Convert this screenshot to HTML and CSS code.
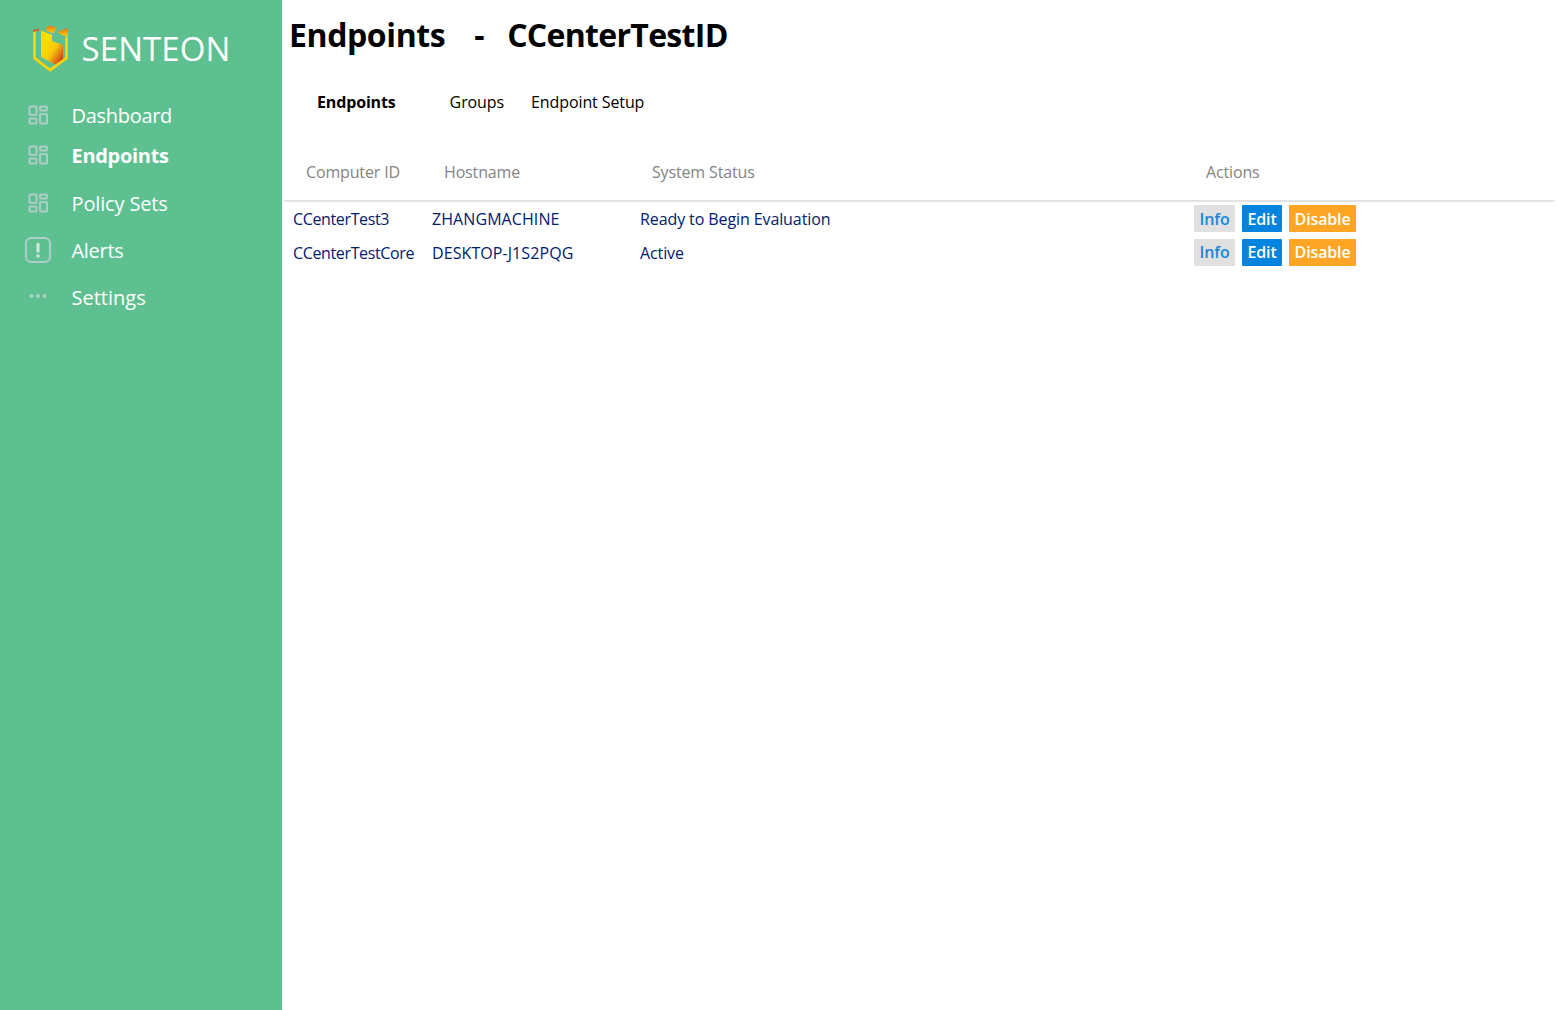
FILE: index.html
```html
<!DOCTYPE html>
<html lang="en">
<head>
    <meta charset="UTF-8">
    <meta name="viewport" content="width=device-width, initial-scale=1.0">
    <title>Endpoints - Senteon</title>
    <link rel="stylesheet" href="styles.css">
</head>
<body>
    <div class="layout">
        <aside class="sidebar">
            <div class="brand">
                <svg class="brand-logo" width="40" height="48" viewBox="30 25 40 48">
                    <defs>
                        <linearGradient id="logoFill" x1="0.2" y1="0.3" x2="0.85" y2="0.95">
                            <stop offset="0" stop-color="#ffdc00"/>
                            <stop offset="0.5" stop-color="#f8c90c"/>
                            <stop offset="1" stop-color="#d8400f"/>
                        </linearGradient>
                        <linearGradient id="logoTop" x1="0" y1="0" x2="0" y2="1">
                            <stop offset="0" stop-color="#e8701a"/>
                            <stop offset="1" stop-color="#ffd400"/>
                        </linearGradient>
                    </defs>
                    <path d="M34.500 30V58L50 70L66.500 58V37" fill="none" stroke="#ffd400" stroke-width="2.600"/>
                    <path d="M33 30L39 28.500L39 30.500L33 32Z" fill="#dc5a1a"/>
                    <path d="M41 30.500L52 35V41L63 45V59L55 64.500L41 57Z" fill="url(#logoFill)"/>
                    <path d="M46 27.500L50 25.500L57 28L53 33.500L46 30.500Z" fill="url(#logoTop)"/>
                    <path d="M57 32L68 28V37L62 35Z" fill="url(#logoTop)"/>
                </svg>
                <span class="brand-name">SENTEON</span>
            </div>
            <nav class="nav">
                <a class="nav-item nav-dashboard" href="#">
                    <svg class="nav-icon" width="24" height="24" viewBox="0 0 24 24"><rect x="3.500" y="3.500" width="7" height="8.500" rx="1"/><rect x="14" y="3.500" width="7" height="4" rx="1"/><rect x="14" y="11" width="7" height="9.500" rx="1"/><rect x="3.500" y="15.500" width="7" height="5" rx="1"/></svg>
                    <span>Dashboard</span>
                </a>
                <a class="nav-item nav-endpoints active" href="#">
                    <svg class="nav-icon" width="24" height="24" viewBox="0 0 24 24"><rect x="3.500" y="3.500" width="7" height="8.500" rx="1"/><rect x="14" y="3.500" width="7" height="4" rx="1"/><rect x="14" y="11" width="7" height="9.500" rx="1"/><rect x="3.500" y="15.500" width="7" height="5" rx="1"/></svg>
                    <span>Endpoints</span>
                </a>
                <a class="nav-item nav-policy" href="#">
                    <svg class="nav-icon" width="24" height="24" viewBox="0 0 24 24"><rect x="3.500" y="3.500" width="7" height="8.500" rx="1"/><rect x="14" y="3.500" width="7" height="4" rx="1"/><rect x="14" y="11" width="7" height="9.500" rx="1"/><rect x="3.500" y="15.500" width="7" height="5" rx="1"/></svg>
                    <span>Policy Sets</span>
                </a>
                <a class="nav-item nav-alerts" href="#">
                    <svg class="nav-icon" width="26" height="26" viewBox="0 0 26 26"><rect x="1" y="1" width="24" height="24" rx="5"/><path class="mark" d="M13 6v9.500M13 17.500v3"/></svg>
                    <span>Alerts</span>
                </a>
                <a class="nav-item nav-settings" href="#">
                    <svg class="nav-icon dots" width="24" height="24" viewBox="0 0 24 24"><circle cx="5.500" cy="11" r="2"/><circle cx="12" cy="11" r="2"/><circle cx="18.500" cy="11" r="2"/></svg>
                    <span>Settings</span>
                </a>
            </nav>
        </aside>
        <main class="content">
            <h1 class="page-title"><span>Endpoints</span><span class="dash">-</span><span class="title-id">CCenterTestID</span></h1>
            <div class="tabs">
                <a class="tab active" href="#">Endpoints</a>
                <a class="tab tab-groups" href="#">Groups</a>
                <a class="tab tab-setup" href="#">Endpoint Setup</a>
            </div>
            <table class="endpoints">
                <thead>
                    <tr>
                        <th class="col-id">Computer ID</th>
                        <th class="col-host">Hostname</th>
                        <th class="col-status">System Status</th>
                        <th>Actions</th>
                    </tr>
                </thead>
                <tbody>
                    <tr>
                        <td>CCenterTest3</td>
                        <td>ZHANGMACHINE</td>
                        <td>Ready to Begin Evaluation</td>
                        <td class="actions">
                            <button class="btn btn-info">Info</button>
                            <button class="btn btn-edit">Edit</button>
                            <button class="btn btn-disable">Disable</button>
                        </td>
                    </tr>
                    <tr>
                        <td>CCenterTestCore</td>
                        <td>DESKTOP-J1S2PQG</td>
                        <td>Active</td>
                        <td class="actions">
                            <button class="btn btn-info">Info</button>
                            <button class="btn btn-edit">Edit</button>
                            <button class="btn btn-disable">Disable</button>
                        </td>
                    </tr>
                </tbody>
            </table>
        </main>
    </div>
</body>
</html>
```

FILE: styles.css
```css
* {
    box-sizing: border-box;
}

html,
body {
    height: 100%;
}

body {
    margin: 0;
    font-family: "Open Sans", "Noto Sans", Arial, sans-serif;
    background-color: #fff;
    overflow: hidden;
}

.layout {
    display: flex;
    height: 100%;
}

.sidebar {
    width: 282px;
    flex-shrink: 0;
    background-color: #5ec090;
    color: #fff;
}

.brand {
    display: flex;
    align-items: center;
    height: 48px;
    margin-top: 25px;
    padding-left: 30px;
}

.brand-logo {
    flex-shrink: 0;
}

.brand-name {
    margin-left: 11.500px;
    font-size: 33px;
    line-height: 48px;
    letter-spacing: 0.1px;
}

.nav {
    display: flex;
    flex-direction: column;
    margin-top: 22px;
}

.nav-item {
    display: flex;
    align-items: center;
    height: 40px;
    padding-left: 26px;
    color: #fff;
    text-decoration: none;
    font-size: 20px;
    letter-spacing: -0.3px;
}

.nav-item span {
    margin-left: 21.500px;
}

.nav-endpoints {
    margin-bottom: 8px;
}

.nav-policy,
.nav-alerts {
    margin-bottom: 7px;
}

.nav-policy {
    letter-spacing: -0.15px;
}

.nav-settings {
    letter-spacing: 0;
}

.nav-item.active {
    font-weight: 700;
}

.nav-icon {
    flex-shrink: 0;
    fill: none;
    stroke: #aecdc6;
    stroke-width: 2;
}

.nav-alerts .nav-icon {
    margin-left: -1px;
}

.nav-alerts span {
    margin-left: 20.500px;
}

.nav-icon .mark {
    stroke: #d4e4e0;
    stroke-width: 3;
}

.nav-icon.dots {
    fill: #aecdc6;
    stroke: none;
}

.content {
    flex: 1;
    min-width: 0;
    padding: 0 3px 0 2px;
    color: #000;
}

.page-title {
    display: flex;
    margin: 0;
    padding: 13px 0 0 5px;
    font-size: 32px;
    font-weight: 700;
    line-height: 44px;
    letter-spacing: -0.4px;
}

.page-title .dash {
    margin: 0 23px 0 29px;
}

.page-title .title-id {
    letter-spacing: -0.7px;
}

.tabs {
    display: flex;
    margin-top: 33px;
    padding-left: 33px;
    font-size: 16px;
    line-height: 24px;
}

.tab {
    color: #000;
    text-decoration: none;
    letter-spacing: -0.1px;
}

.tab.active {
    font-weight: 700;
    letter-spacing: -0.15px;
}

.tab-groups {
    margin-left: 54px;
}

.tab-setup {
    margin-left: 27px;
}

.endpoints {
    width: 100%;
    margin-top: 44px;
    table-layout: fixed;
    border-collapse: collapse;
    font-size: 16px;
}

.endpoints th {
    height: 43px;
    padding: 0 0 15px 21px;
    border-bottom: 2px solid #e2e2e2;
    color: #848484;
    font-weight: 400;
    text-align: left;
    letter-spacing: -0.15px;
}

.endpoints th.col-id {
    width: 139px;
    padding-left: 22px;
}

.col-host {
    width: 208px;
}

.col-status {
    width: 554px;
}

.endpoints td {
    height: 34px;
    padding: 0 0 0 9px;
    color: #00206e;
    letter-spacing: -0.1px;
    vertical-align: middle;
}

.endpoints td:first-child {
    letter-spacing: -0.36px;
}

.endpoints td:nth-child(2) {
    letter-spacing: 0.08px;
}

/* text in the second row sits a pixel lower than its buttons */
.endpoints tr + tr td {
    padding-top: 2px;
}

.endpoints tr + tr td.actions {
    padding-top: 0;
}

.endpoints td.actions {
    font-size: 0;
}

.btn {
    height: 27px;
    margin-right: 7px;
    padding: 0 5.500px;
    border: none;
    border-radius: 1px;
    font-family: inherit;
    font-size: 16px;
    font-weight: 600;
    letter-spacing: -0.15px;
    cursor: pointer;
}

.btn-info {
    background-color: #e0e0e0;
    color: #1a85dc;
}

.btn-edit {
    background-color: #0084e0;
    color: #fff;
}

.btn-disable {
    background-color: #ffa526;
    color: #fff;
}
```
